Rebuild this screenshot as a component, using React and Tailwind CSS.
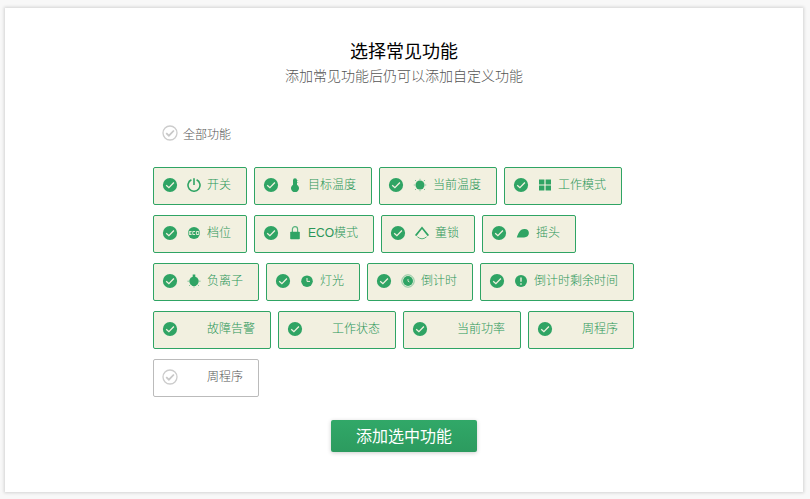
import { useState } from "react";

const POWER = (
  <g fill="none" stroke="currentColor" strokeWidth="1.6">
    <path d="M4.4 1.8a6 6 0 1 0 5.2 0" />
    <path d="M7 0.2v6.8" />
  </g>
);
const THERMOMETER = (
  <g fill="currentColor">
    <path d="M5 2.2a2 2 0 0 1 4 0v4.6a4 4 0 1 1-4 0z" />
    <path d="M9 2.5h1.2M9 4.5h1.2" stroke="currentColor" strokeWidth="0.4" />
  </g>
);
const SUN = (
  <g>
    <circle cx="7" cy="7" r="4.5" fill="currentColor" />
    <path
      d="M7 0.8v1M7 12.2v1M0.8 7h1M12.2 7h1M2 2l1.1 1.1M10.9 10.9l1.1 1.1M2 12l1.1-1.1M10.9 3.1l1.1-1.1"
      stroke="currentColor"
      strokeWidth="1"
      opacity="0.6"
    />
  </g>
);
const GRID = <path d="M1 1.5h5.4v5H1zM7.6 1.5H13v5H7.6zM1 7.6h5.4v5H1zM7.6 7.6H13v5H7.6z" fill="currentColor" />;
const ECO = (
  <g>
    <circle cx="7" cy="7" r="6" fill="currentColor" />
    <path d="M4.6 5.5H2.2v3h2.4M2.2 7h2M8.1 5.5H5.8v3h2.3M9.4 5.5h2.4v3H9.4z" fill="none" stroke="#f2f0e0" strokeWidth="0.9" />
  </g>
);
const LOCK = (
  <g>
    <path d="M4.4 6V3.2a2.6 2.6 0 0 1 5.2 0V6" fill="none" stroke="currentColor" strokeWidth="1.2" opacity="0.8" />
    <rect x="2.2" y="5.8" width="9.6" height="7.4" rx="0.8" fill="currentColor" />
  </g>
);
const SWING = (
  <g fill="none" stroke="currentColor">
    <path d="M0.6 9.6 7 1.8l6.4 7.8" strokeWidth="1.7" />
    <path d="M2.4 10.8q4.6 4 9.2 0" strokeWidth="1" opacity="0.8" />
  </g>
);
const LEAF = <path d="M0.8 11.4C2 8 3.6 3 8.4 3A4.3 4.3 0 0 1 12.9 7c0 2.7-2 4.4-4.8 4.4z" fill="currentColor" />;
const BULB = (
  <g>
    <path d="M5.7 0.6h2.6v2.2a4.6 4.6 0 0 1 2.3 7.4L8.6 12H5.4l-2-1.8a4.6 4.6 0 0 1 2.3-7.4z" fill="currentColor" />
    <path d="M0.4 7.2h1.6M12 7.2h1.6M2 12l1.2-1.2M12 12l-1.2-1.2M7 12v1.5" stroke="currentColor" strokeWidth="0.9" opacity="0.6" />
  </g>
);
const CLOCK = (
  <g>
    <circle cx="7" cy="7.2" r="5.8" fill="currentColor" />
    <path d="M7 4v3.4h3" fill="none" stroke="#f2f0e0" strokeWidth="1" />
  </g>
);
const TIMER = (
  <g>
    <circle cx="7" cy="7" r="6.2" fill="none" stroke="currentColor" strokeWidth="0.9" opacity="0.6" />
    <circle cx="7" cy="7" r="5" fill="currentColor" />
    <path d="M7 5v2.2l1.4.8" fill="none" stroke="#f2f0e0" strokeWidth="0.8" />
  </g>
);
const ALERT = (
  <g>
    <circle cx="7" cy="7" r="6" fill="currentColor" />
    <path d="M7 3.4v4.4M7 9.2v1.5" stroke="#f2f0e0" strokeWidth="1.4" />
  </g>
);

const FEATURES = [
  { id: "power", label: "开关", icon: POWER },
  { id: "target-temp", label: "目标温度", icon: THERMOMETER },
  { id: "current-temp", label: "当前温度", icon: SUN },
  { id: "mode", label: "工作模式", icon: GRID },
  { id: "gear", label: "档位", icon: ECO },
  { id: "eco", label: "ECO模式", icon: LOCK },
  { id: "child-lock", label: "童锁", icon: SWING },
  { id: "swing", label: "摇头", icon: LEAF },
  { id: "anion", label: "负离子", icon: BULB },
  { id: "light", label: "灯光", icon: CLOCK },
  { id: "countdown", label: "倒计时", icon: TIMER },
  { id: "remaining", label: "倒计时剩余时间", icon: ALERT },
  { id: "fault", label: "故障告警" },
  { id: "status", label: "工作状态" },
  { id: "watt", label: "当前功率" },
  { id: "week", label: "周程序" },
  { id: "week-2", label: "周程序" },
];

function CheckCircle({ id, checked, onChange }) {
  return (
    <span className="grid size-4 shrink-0 place-items-center">
      <input
        id={id}
        type="checkbox"
        checked={checked}
        onChange={onChange}
        className="col-start-1 row-start-1 size-4 cursor-pointer appearance-none rounded-full"
      />
      <svg viewBox="0 0 16 16" aria-hidden="true" className="pointer-events-none col-start-1 row-start-1 size-4">
        {checked ? (
          <>
            <circle cx="8" cy="8" r="7.1" fill="#2fa464" />
            <path d="m4.2 8.2 2.7 2.5 5-5.2" fill="none" stroke="#f2f0e0" strokeWidth="1.3" />
          </>
        ) : (
          <>
            <circle cx="8" cy="8" r="7" fill="none" stroke="#cccccc" strokeWidth="1.3" />
            <path d="m4.2 8.2 2.7 2.5 5-5.2" fill="none" stroke="#c8c8c8" strokeWidth="1.8" />
          </>
        )}
      </svg>
    </span>
  );
}

function FeatureChip({ feature, checked, onToggle }) {
  const tone = checked ? "border-[#2fa464] bg-[#f2f0e0] text-[#2fa464]" : "border-[#bbbbbb] bg-white text-[#555555]";
  return (
    <label
      htmlFor={feature.id}
      className={`flex h-[38px] cursor-pointer items-center rounded-xs border pr-[15px] pb-0.5 pl-2 text-xs ${tone}`}
    >
      <CheckCircle id={feature.id} checked={checked} onChange={onToggle} />
      <svg viewBox="0 0 14 14" aria-hidden="true" className="mr-1.5 ml-[9px] size-3.5 shrink-0">
        {feature.icon}
      </svg>
      <span className={checked ? "whitespace-nowrap text-[#2a9658]" : "whitespace-nowrap"}>{feature.label}</span>
    </label>
  );
}

export default function App() {
  const [selected, setSelected] = useState(() => new Set(FEATURES.slice(0, -1).map((f) => f.id)));
  const all = selected.size === FEATURES.length;

  const toggle = (id) =>
    setSelected((prev) => {
      const next = new Set(prev);
      if (!next.delete(id)) next.add(id);
      return next;
    });

  return (
    <div className="min-h-screen bg-[#f8f8f8] pt-2 pr-[7px] pb-[7px] pl-[5px] font-['Liberation_Sans','Noto_Sans_CJK_SC',sans-serif] font-light">
      <main className="flex flex-col items-center bg-white pt-8 pb-10 shadow-[0_0_3px_1px_rgba(0,0,0,0.15)]">
        <h1 className="text-lg leading-6 font-normal text-black">选择常见功能</h1>
        <p className="text-sm leading-6 text-[#555555]">添加常见功能后仍可以添加自定义功能</p>

        <form className="mt-[37px] flex w-full max-w-[502px] flex-col" onSubmit={(e) => e.preventDefault()}>
          <label htmlFor="all" className="flex cursor-pointer items-start gap-[5px] self-start pl-[9px] text-xs text-[#555555]">
            <CheckCircle
              id="all"
              checked={all}
              onChange={() => setSelected(new Set(all ? [] : FEATURES.map((f) => f.id)))}
            />
            <span className="pt-0.5">全部功能</span>
          </label>

          <div className="mt-6 flex flex-wrap gap-x-[7px] gap-y-2.5">
            {FEATURES.map((f) => (
              <FeatureChip key={f.id} feature={f} checked={selected.has(f.id)} onToggle={() => toggle(f.id)} />
            ))}
          </div>

          <button
            type="submit"
            className="mt-[23px] h-8 w-[146px] cursor-pointer self-center rounded-xs bg-linear-to-b from-[#31a868] to-[#2c9b5f] pt-0.5 text-base font-normal text-white shadow-[0_1px_4px_rgba(0,0,0,0.2)]"
          >
            添加选中功能
          </button>
        </form>
      </main>
    </div>
  );
}
